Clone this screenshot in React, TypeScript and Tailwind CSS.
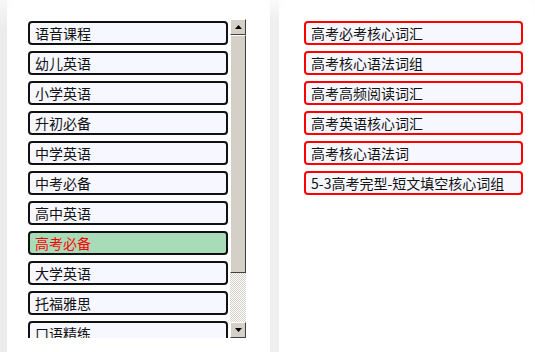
import React from 'react';

const categories = [
  '语音课程',
  '幼儿英语',
  '小学英语',
  '升初必备',
  '中学英语',
  '中考必备',
  '高中英语',
  '高考必备',
  '大学英语',
  '托福雅思',
  '口语精练',
];

const books = [
  '高考必考核心词汇',
  '高考核心语法词组',
  '高考高频阅读词汇',
  '高考英语核心词汇',
  '高考核心语法词',
  '5-3高考完型-短文填空核心词组',
];

const font = { fontFamily: '"Microsoft YaHei", "Noto Sans CJK SC", sans-serif' };

const ScrollButton: React.FC<{ up?: boolean }> = ({ up }) => (
  <div className="w-4 h-4 shrink-0 bg-[#d4d0c8] border border-t-white border-l-white border-r-[#404040] border-b-[#404040] flex items-center justify-center">
    <svg width="7" height="4" viewBox="0 0 7 4">
      {up ? <polygon points="3.5,0 7,4 0,4" fill="#000" /> : <polygon points="0,0 7,0 3.5,4" fill="#000" />}
    </svg>
  </div>
);

export default function App() {
  const selected = 7;

  return (
    <div className="w-[535px] h-[352px] bg-white flex overflow-hidden" style={font}>
      {/* left edge strip */}
      <div className="w-[7px] h-full bg-[linear-gradient(to_bottom,#f7f7f7,#ececec_8%,#ececec)]" />

      {/* left panel */}
      <div className="w-[263px] h-full pt-[19px] pl-[21px] bg-[radial-gradient(ellipse_75%_95%_at_50%_55%,#fff_85%,#f1f1f1)]">
        <div className="flex h-[319px] gap-[2px]">
          <div className="w-[200px] h-full overflow-hidden pt-[2px] flex flex-col gap-[6px]">
            {categories.map((c, i) => (
              <div
                key={c}
                className={`h-6 shrink-0 border-2 border-[#111] rounded-[4px] pl-[5px] flex items-center text-[14px] leading-none ${
                  i === selected ? 'bg-[#a8dcb9] text-[#ff0000]' : 'bg-[#f7f7ff] text-[#111]'
                }`}
              >
                {c}
              </div>
            ))}
          </div>

          {/* classic scrollbar */}
          <div className="w-4 h-full flex flex-col">
            <ScrollButton up />
            <div className="h-[238px] shrink-0 bg-[#d4d0c8] border border-t-white border-l-white border-r-[#404040] border-b-[#404040]" />
            <div className="flex-1 bg-[repeating-conic-gradient(#d4d0c8_0_25%,#ffffff_0_50%)] bg-[length:2px_2px]" />
            <ScrollButton />
          </div>
        </div>
      </div>

      {/* middle divider */}
      <div className="w-[9px] h-full bg-[linear-gradient(to_bottom,#fafafa,#efefef_6%,#efefef)]" />

      {/* right panel */}
      <div className="flex-1 h-full pt-[21px] pl-[25px] bg-[radial-gradient(ellipse_75%_95%_at_50%_55%,#fff_85%,#f1f1f1)]">
        <div className="w-[219px] flex flex-col gap-[6px]">
          {books.map((b) => (
            <div
              key={b}
              className="h-6 border-2 border-[#ff0000] rounded-[4px] pl-[5px] flex items-center text-[14px] leading-none bg-[#f7f7ff] text-[#111]"
            >
              {b}
            </div>
          ))}
        </div>
      </div>
    </div>
  );
}
